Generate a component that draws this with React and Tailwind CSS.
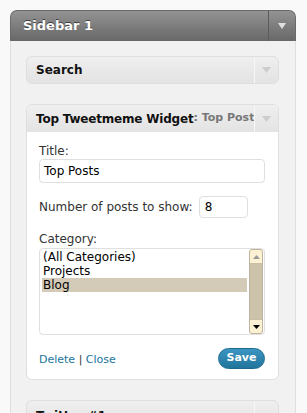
export default function App() {
  const font = "font-['DejaVu_Sans',Verdana,sans-serif]";
  return (
    <div className={`h-[413px] w-[307px] bg-[#f9f9f9] pt-[10px] pl-[10px] overflow-hidden ${font}`}>
      <div className="w-[286px]">
        {/* Sidebar header */}
        <div className="flex h-[31px] rounded-t-[7px] bg-gradient-to-b from-[#939393] to-[#686868] border border-[#6a6a6a] border-b-0">
          <div className="flex-1 flex items-center pl-[12px] text-[13px] font-bold text-white [text-shadow:0_-1px_0_#3d3d3d]">
            Sidebar 1
          </div>
          <div className="w-[27px] border-l border-[#5b5b5b] flex items-center justify-center">
            <svg width="8" height="6" viewBox="0 0 8 6"><polygon points="0,0 8,0 4,6" fill="#e0e0e0" /></svg>
          </div>
        </div>
        {/* Sidebar body */}
        <div className="bg-[#f1f1f1] border-x border-[#dfdfdf] pl-[15px] pr-[16px] pt-[15px] pb-[20px]">
          {/* Search */}
          <div className="flex h-[28px] rounded-[6px] border border-[#dfdfdf] bg-gradient-to-b from-[#efefef] to-[#e3e3e3]">
            <div className="flex-1 flex items-center pl-[9px] text-[12px] font-bold text-[#111]">Search</div>
            <div className="w-[24px] border-l border-[#f7f7f7] flex items-center justify-center">
              <svg width="9" height="6" viewBox="0 0 9 6"><polygon points="0,0 9,0 4.5,6" fill="#cdcdcd" /></svg>
            </div>
          </div>

          {/* Tweetmeme widget */}
          <div className="mt-[20px] rounded-[6px] border border-[#dfdfdf] bg-white overflow-hidden">
            <div className="flex h-[27px] bg-gradient-to-b from-[#efefef] to-[#e3e3e3]">
              <div className="flex-1 flex items-center pl-[9px] overflow-hidden whitespace-nowrap text-[12px] font-bold text-[#111] tracking-[-0.2px]">
                Top Tweetmeme Widget<span className="text-[11px] text-[#777] tracking-normal">: Top Posts</span>
              </div>
              <div className="w-[24px] shrink-0 border-l border-[#f7f7f7] flex items-center justify-center">
                <svg width="9" height="6" viewBox="0 0 9 6"><polygon points="0,0 9,0 4.5,6" fill="#cdcdcd" /></svg>
              </div>
            </div>
            <div className="pl-[12px] pr-[13px] pt-[12px] pb-[10px] text-[12px] text-[#333]">
              <div className="leading-[15px]">Title:</div>
              <div className="h-[24px] rounded-[4px] border border-[#dfdfdf] flex items-center pl-[4px] text-[12px] text-black">
                Top Posts
              </div>
              <div className="mt-[13px] flex items-center h-[22px]">
                <span>Number of posts to show:</span>
                <div className="ml-[6px] w-[49px] h-[22px] rounded-[4px] border border-[#dfdfdf] flex items-center pl-[5px] text-black">8</div>
              </div>
              <div className="mt-[14px] leading-[15px]">Category:</div>
              <div className="mt-[1px] h-[87px] rounded-[4px] border border-[#dfdfdf] flex text-black">
                <div className="flex-1 pt-[1px] pl-[2px] pr-[2px] leading-[14px]">
                  <div className="pl-[1px]">(All Categories)</div>
                  <div className="pl-[1px]">Projects</div>
                  <div className="pl-[1px] bg-[#d4cab8]">Blog</div>
                </div>
                <div className="w-[14px] mr-[1px] flex flex-col rounded-[3px] border border-[#bfb59f] bg-[#cdc2aa] overflow-hidden">
                  <div className="h-[14px] bg-[#fdf1d3] border-b border-[#c9bea6] flex items-center justify-center">
                    <svg width="7" height="4" viewBox="0 0 7 4"><polygon points="0,4 7,4 3.5,0" fill="#9a9a9a" /></svg>
                  </div>
                  <div className="flex-1" />
                  <div className="h-[14px] bg-[#fdf1d3] border-t border-[#c9bea6] flex items-center justify-center">
                    <svg width="7" height="4" viewBox="0 0 7 4"><polygon points="0,0 7,0 3.5,4" fill="#000" /></svg>
                  </div>
                </div>
              </div>
              <div className="mt-[13px] flex items-center justify-between">
                <div className="text-[11px] text-[#333] pt-[3px]">
                  <span className="text-[#21759b]">Delete</span> | <span className="text-[#21759b]">Close</span>
                </div>
                <div className="h-[21px] w-[47px] rounded-full bg-gradient-to-b from-[#3b95c3] to-[#21759b] border border-[#1e6a8d] flex items-center justify-center text-[11px] font-bold text-white">
                  Save
                </div>
              </div>
            </div>
          </div>

          {/* Twitter #1 */}
          <div className="mt-[20px] flex h-[29px] rounded-[6px] border border-[#dfdfdf] bg-gradient-to-b from-[#efefef] to-[#e3e3e3]">
            <div className="flex-1 flex items-start pt-[6px] pl-[9px] text-[12px] font-bold text-[#111]">Twitter #1</div>
            <div className="w-[24px] border-l border-[#f7f7f7]" />
          </div>
        </div>
      </div>
    </div>
  );
}
